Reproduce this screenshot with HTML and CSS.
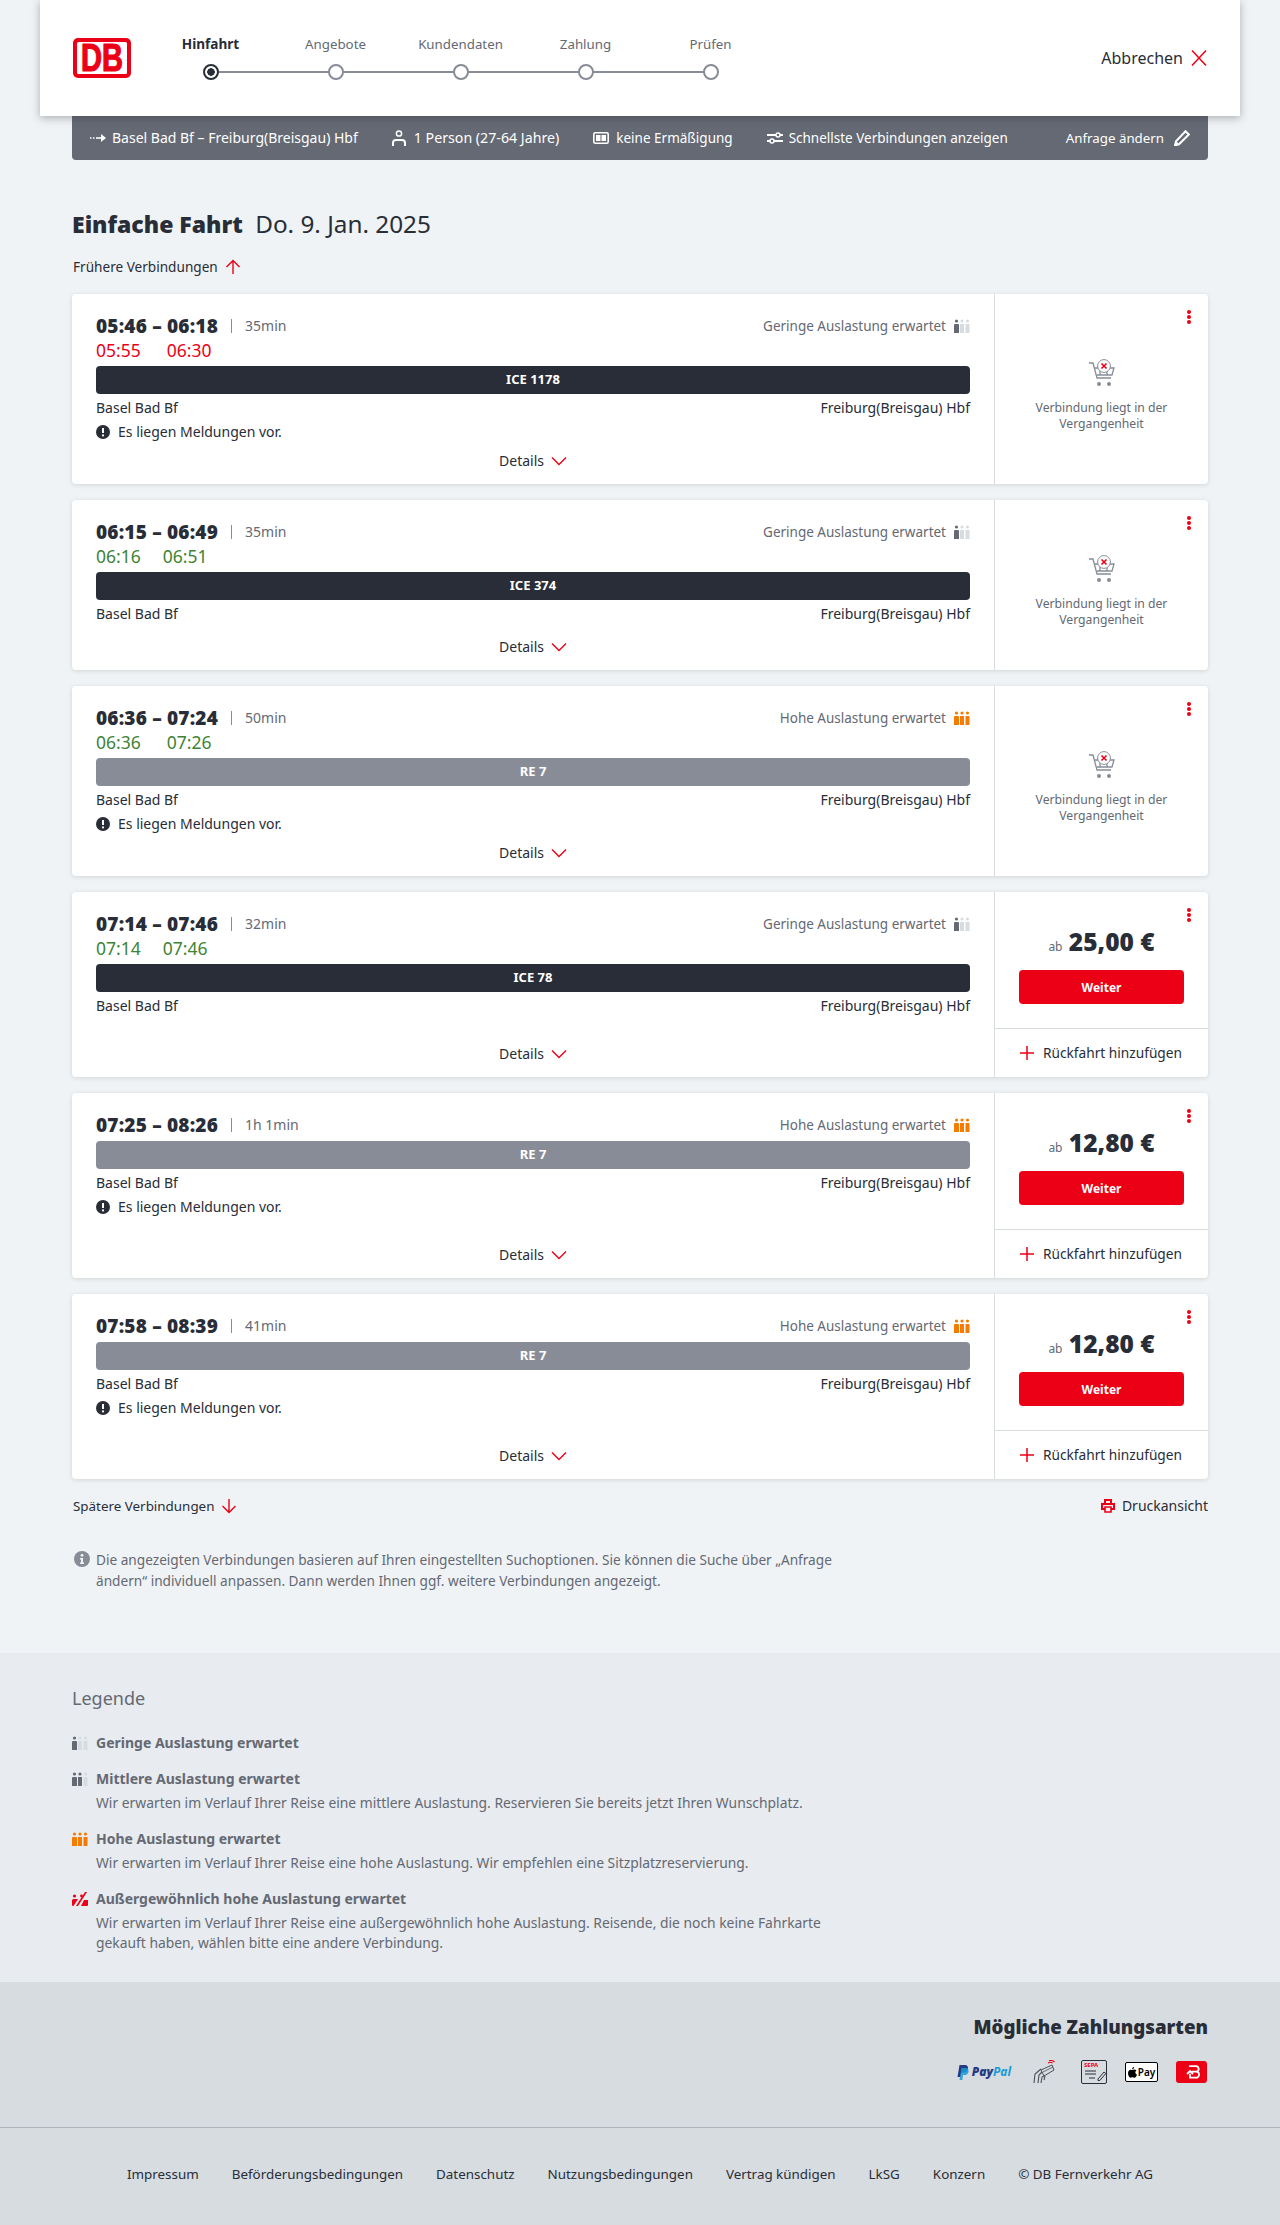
FILE: index.html
```html
<!DOCTYPE html>
<html lang="de">
<head>
    <meta charset="UTF-8">
    <meta name="viewport" content="width=device-width, initial-scale=1.0">
    <title>Einfache Fahrt - Angebote</title>
    <link rel="stylesheet" href="styles.css">
</head>
<body>
    <!-- Icon-Sprite -->
    <svg class="sprite" aria-hidden="true">
        <symbol id="i-load" viewBox="0 0 16 14">
            <circle class="p1" cx="2.5" cy="2" r="1.6"/><path class="p1" d="M0 6a1 1 0 0 1 1-1h3a1 1 0 0 1 1 1v8H0z"/>
            <circle class="p2" cx="8" cy="2" r="1.6"/><path class="p2" d="M6 5h4v9H6z"/>
            <circle class="p3" cx="13.5" cy="2" r="1.6"/><path class="p3" d="M11.5 5h4v9h-4z"/>
        </symbol>
        <symbol id="i-load-max" viewBox="0 0 16 14">
            <circle cx="2.5" cy="4" r="1.6"/><path d="M0 8.5a1.5 1.5 0 0 1 1.5-1.5H6L1.5 14H1a1 1 0 0 1-1-1z"/>
            <path d="M4 14l9-14h2L6 14z"/>
            <circle cx="9.5" cy="4" r="1.4"/><path d="M9 14l3-6h4v5a1 1 0 0 1-1 1z"/>
        </symbol>
        <symbol id="i-cart" viewBox="0 0 28 28">
            <path d="M1 4h4l4 15h14M7 9h19l-2 7H9M12 9v7M19 9v7" fill="none" stroke="#878c96" stroke-width="1.3"/>
            <circle cx="11" cy="25" r="2" fill="#878c96"/><circle cx="21" cy="25" r="2" fill="#878c96"/>
            <circle cx="16" cy="7" r="6.4" fill="#fff" stroke="#878c96" stroke-width="1"/>
            <path d="M13.5 4.5l5 5m0-5l-5 5" stroke="#ec0016" stroke-width="1.6"/>
        </symbol>
        <symbol id="i-chevron" viewBox="0 0 16 10"><path d="M1 1.5l7 7 7-7" fill="none" stroke="#ec0016" stroke-width="1.4"/></symbol>
        <symbol id="i-plus" viewBox="0 0 16 16"><path d="M8 1v14M1 8h14" stroke="#ec0016" stroke-width="1.5"/></symbol>
        <symbol id="i-alert" viewBox="0 0 14 14"><circle cx="7" cy="7" r="7" fill="#282d37"/><path d="M7 3v5" stroke="#fff" stroke-width="2"/><circle cx="7" cy="10.4" r="1.1" fill="#fff"/></symbol>
    </svg>

    <header class="top-bar">
        <svg class="db-logo" viewBox="0 0 58 40">
            <rect x="0" y="0" width="58" height="40" rx="5" fill="#ec0016"/>
            <rect x="4" y="4" width="50" height="32" rx="1.5" fill="#fff"/>
            <text x="29" y="33" class="db-logo-text" textLength="42" lengthAdjust="spacingAndGlyphs" text-anchor="middle">DB</text>
        </svg>
        <ol class="steps">
            <li class="step step-active"><span>Hinfahrt</span><i class="step-dot"></i></li>
            <li class="step"><span>Angebote</span><i class="step-dot"></i></li>
            <li class="step"><span>Kundendaten</span><i class="step-dot"></i></li>
            <li class="step"><span>Zahlung</span><i class="step-dot"></i></li>
            <li class="step"><span>Prüfen</span><i class="step-dot"></i></li>
        </ol>
        <a class="cancel">Abbrechen
            <svg width="16" height="16" viewBox="0 0 16 16"><path d="M1 .5l14 15m0-15L1 15.5" stroke="#ec0016" stroke-width="1.5"/></svg>
        </a>
    </header>

    <main class="content">
        <div class="search-bar">
            <span class="search-item item-route">
                <svg width="16" height="10" viewBox="0 0 16 10"><path d="M0 5h1.5M3 5h1.5" stroke="#fff" stroke-width="1.4"/><path d="M6 5h8" stroke="#fff" stroke-width="1.6"/><path d="M11 1l5 4-5 4z" fill="#fff"/></svg>
                Basel Bad Bf – Freiburg(Breisgau) Hbf</span>
            <span class="search-item item-person">
                <svg width="14" height="16" viewBox="0 0 14 16"><circle cx="7" cy="3.500" r="2.600" fill="none" stroke="#fff" stroke-width="1.500"/><path d="M1 16v-3a3 3 0 0 1 3-3h6a3 3 0 0 1 3 3v3" fill="none" stroke="#fff" stroke-width="2"/></svg>
                1 Person (27-64 Jahre)</span>
            <span class="search-item item-card">
                <svg width="16" height="14" viewBox="0 0 16 14"><rect x=".8" y="1.800" width="14.400" height="10.400" rx="1.500" fill="none" stroke="#fff" stroke-width="1.600"/><rect x="3" y="4" width="4.500" height="6" fill="#fff"/><rect x="8.500" y="4" width="4.500" height="6" fill="#fff"/></svg>
                keine Ermäßigung</span>
            <span class="search-item item-filter">
                <svg width="16" height="14" viewBox="0 0 16 14"><path d="M0 4h9M13 4h3M0 10h3M7 10h9" stroke="#fff" stroke-width="2"/><circle cx="11" cy="4" r="2" fill="none" stroke="#fff" stroke-width="1.500"/><circle cx="5" cy="10" r="2" fill="none" stroke="#fff" stroke-width="1.500"/></svg>
                Schnellste Verbindungen anzeigen</span>
            <span class="search-item item-change">Anfrage ändern
                <svg width="16" height="16" viewBox="0 0 16 16"><path d="M11.500 1.200l3.300 3.300L5 14.300l-4 1 1-4z" fill="none" stroke="#fff" stroke-width="2"/><path d="M1 15l1-4 3 3z" fill="#fff"/></svg>
            </span>
        </div>

        <h1 class="page-title"><b>Einfache Fahrt</b> <span>Do. 9. Jan. 2025</span></h1>

        <a class="more-link more-early">Frühere Verbindungen
            <svg width="16" height="16" viewBox="0 0 16 16"><path d="M8 15V1.500M1.500 8L8 1.500 14.500 8" fill="none" stroke="#ec0016" stroke-width="1.400"/></svg>
        </a>

        <!-- Verbindung 1 -->
        <article class="card">
            <div class="card-main">
                <div class="times-row">
                    <strong class="times">05:46 – 06:18</strong><span class="duration">35min</span>
                    <span class="load">Geringe Auslastung erwartet <svg class="load-icon load-low"><use href="#i-load"/></svg></span>
                </div>
                <div class="delay delay-late gap-wide"><span>05:55</span><span>06:30</span></div>
                <div class="train train-ice">ICE 1178</div>
                <div class="stations"><span>Basel Bad Bf</span><span>Freiburg(Breisgau) Hbf</span></div>
                <div class="notice"><svg width="14" height="14"><use href="#i-alert"/></svg>Es liegen Meldungen vor.</div>
                <a class="details">Details <svg width="16" height="10"><use href="#i-chevron"/></svg></a>
            </div>
            <aside class="card-side side-past">
                <i class="menu-dots"></i>
                <svg class="cart-icon" width="28" height="28"><use href="#i-cart"/></svg>
                <p>Verbindung liegt in der Vergangenheit</p>
            </aside>
        </article>

        <!-- Verbindung 2 -->
        <article class="card">
            <div class="card-main">
                <div class="times-row">
                    <strong class="times">06:15 – 06:49</strong><span class="duration">35min</span>
                    <span class="load">Geringe Auslastung erwartet <svg class="load-icon load-low"><use href="#i-load"/></svg></span>
                </div>
                <div class="delay gap-narrow"><span>06:16</span><span>06:51</span></div>
                <div class="train train-ice">ICE 374</div>
                <div class="stations"><span>Basel Bad Bf</span><span>Freiburg(Breisgau) Hbf</span></div>
                <a class="details">Details <svg width="16" height="10"><use href="#i-chevron"/></svg></a>
            </div>
            <aside class="card-side side-past">
                <i class="menu-dots"></i>
                <svg class="cart-icon" width="28" height="28"><use href="#i-cart"/></svg>
                <p>Verbindung liegt in der Vergangenheit</p>
            </aside>
        </article>

        <!-- Verbindung 3 -->
        <article class="card">
            <div class="card-main">
                <div class="times-row">
                    <strong class="times">06:36 – 07:24</strong><span class="duration">50min</span>
                    <span class="load">Hohe Auslastung erwartet <svg class="load-icon load-high"><use href="#i-load"/></svg></span>
                </div>
                <div class="delay gap-wide"><span>06:36</span><span>07:26</span></div>
                <div class="train train-re">RE 7</div>
                <div class="stations"><span>Basel Bad Bf</span><span>Freiburg(Breisgau) Hbf</span></div>
                <div class="notice"><svg width="14" height="14"><use href="#i-alert"/></svg>Es liegen Meldungen vor.</div>
                <a class="details">Details <svg width="16" height="10"><use href="#i-chevron"/></svg></a>
            </div>
            <aside class="card-side side-past">
                <i class="menu-dots"></i>
                <svg class="cart-icon" width="28" height="28"><use href="#i-cart"/></svg>
                <p>Verbindung liegt in der Vergangenheit</p>
            </aside>
        </article>

        <!-- Verbindung 4 -->
        <article class="card">
            <div class="card-main">
                <div class="times-row">
                    <strong class="times">07:14 – 07:46</strong><span class="duration">32min</span>
                    <span class="load">Geringe Auslastung erwartet <svg class="load-icon load-low"><use href="#i-load"/></svg></span>
                </div>
                <div class="delay gap-narrow"><span>07:14</span><span>07:46</span></div>
                <div class="train train-ice">ICE 78</div>
                <div class="stations"><span>Basel Bad Bf</span><span>Freiburg(Breisgau) Hbf</span></div>
                <a class="details">Details <svg width="16" height="10"><use href="#i-chevron"/></svg></a>
            </div>
            <aside class="card-side side-offer">
                <i class="menu-dots"></i>
                <div class="price"><small>ab</small> 25,00 €</div>
                <button class="next-btn">Weiter</button>
                <a class="add-return"><svg width="16" height="16"><use href="#i-plus"/></svg>Rückfahrt hinzufügen</a>
            </aside>
        </article>

        <!-- Verbindung 5 -->
        <article class="card">
            <div class="card-main">
                <div class="times-row">
                    <strong class="times">07:25 – 08:26</strong><span class="duration">1h 1min</span>
                    <span class="load">Hohe Auslastung erwartet <svg class="load-icon load-high"><use href="#i-load"/></svg></span>
                </div>
                <div class="train train-re">RE 7</div>
                <div class="stations"><span>Basel Bad Bf</span><span>Freiburg(Breisgau) Hbf</span></div>
                <div class="notice"><svg width="14" height="14"><use href="#i-alert"/></svg>Es liegen Meldungen vor.</div>
                <a class="details">Details <svg width="16" height="10"><use href="#i-chevron"/></svg></a>
            </div>
            <aside class="card-side side-offer">
                <i class="menu-dots"></i>
                <div class="price"><small>ab</small> 12,80 €</div>
                <button class="next-btn">Weiter</button>
                <a class="add-return"><svg width="16" height="16"><use href="#i-plus"/></svg>Rückfahrt hinzufügen</a>
            </aside>
        </article>

        <!-- Verbindung 6 -->
        <article class="card">
            <div class="card-main">
                <div class="times-row">
                    <strong class="times">07:58 – 08:39</strong><span class="duration">41min</span>
                    <span class="load">Hohe Auslastung erwartet <svg class="load-icon load-high"><use href="#i-load"/></svg></span>
                </div>
                <div class="train train-re">RE 7</div>
                <div class="stations"><span>Basel Bad Bf</span><span>Freiburg(Breisgau) Hbf</span></div>
                <div class="notice"><svg width="14" height="14"><use href="#i-alert"/></svg>Es liegen Meldungen vor.</div>
                <a class="details">Details <svg width="16" height="10"><use href="#i-chevron"/></svg></a>
            </div>
            <aside class="card-side side-offer">
                <i class="menu-dots"></i>
                <div class="price"><small>ab</small> 12,80 €</div>
                <button class="next-btn">Weiter</button>
                <a class="add-return"><svg width="16" height="16"><use href="#i-plus"/></svg>Rückfahrt hinzufügen</a>
            </aside>
        </article>

        <div class="after-cards">
            <a class="more-link more-late">Spätere Verbindungen
                <svg width="16" height="16" viewBox="0 0 16 16"><path d="M8 1v13.500M1.500 8L8 14.500 14.500 8" fill="none" stroke="#ec0016" stroke-width="1.400"/></svg>
            </a>
            <a class="print-link">
                <svg width="14" height="14" viewBox="0 0 14 14"><path d="M4 5V1h6v4M4 10H1V5h12v5h-3" fill="none" stroke="#ec0016" stroke-width="2"/><path d="M4 8h6v5H4z" fill="none" stroke="#ec0016" stroke-width="1.600"/></svg>
                Druckansicht</a>
        </div>

        <div class="info-note">
            <svg width="16" height="16" viewBox="0 0 16 16"><circle cx="8" cy="8" r="8" fill="#878c96"/><circle cx="8" cy="4.300" r="1.400" fill="#f0f3f5"/><path d="M6 7h3v4.500h1V13H6v-1.500h1V8.500H6z" fill="#f0f3f5"/></svg>
            <p>Die angezeigten Verbindungen basieren auf Ihren eingestellten Suchoptionen. Sie können die Suche über „Anfrage ändern“ individuell anpassen. Dann werden Ihnen ggf. weitere Verbindungen angezeigt.</p>
        </div>
    </main>

    <section class="legend">
        <h2>Legende</h2>
        <div class="legend-item">
            <svg class="load-icon load-low"><use href="#i-load"/></svg>
            <div><h3>Geringe Auslastung erwartet</h3></div>
        </div>
        <div class="legend-item">
            <svg class="load-icon load-mid"><use href="#i-load"/></svg>
            <div><h3>Mittlere Auslastung erwartet</h3>
            <p>Wir erwarten im Verlauf Ihrer Reise eine mittlere Auslastung. Reservieren Sie bereits jetzt Ihren Wunschplatz.</p></div>
        </div>
        <div class="legend-item">
            <svg class="load-icon load-high"><use href="#i-load"/></svg>
            <div><h3>Hohe Auslastung erwartet</h3>
            <p>Wir erwarten im Verlauf Ihrer Reise eine hohe Auslastung. Wir empfehlen eine Sitzplatzreservierung.</p></div>
        </div>
        <div class="legend-item">
            <svg class="load-icon load-max"><use href="#i-load-max"/></svg>
            <div><h3>Außergewöhnlich hohe Auslastung erwartet</h3>
            <p>Wir erwarten im Verlauf Ihrer Reise eine außergewöhnlich hohe Auslastung. Reisende, die noch keine Fahrkarte gekauft haben, wählen bitte eine andere Verbindung.</p></div>
        </div>
    </section>

    <section class="payment">
        <h2>Mögliche Zahlungsarten</h2>
        <div class="pay-icons">
            <span class="pay-paypal">
                <svg width="12" height="15" viewBox="0 0 12 15"><path d="M2.500 0h5c3 0 4 2 3.300 4.200C10 7 8 7.500 5.500 7.500H4.300L3.500 12H.5z" fill="#253b80"/><path d="M4.500 3h4.800c2 .5 2.700 2 2.200 4-.7 2.500-2.500 3-4.500 3H6l-.7 5H2.500z" fill="#179bd7" opacity=".85"/></svg>
                <em><b>Pay</b>Pal</em></span>
            <svg class="pay-nfc" width="22" height="24" viewBox="0 0 22 24">
                <path d="M8 10l11-5 2 5-10 6z" fill="none" stroke="#4a4f58" stroke-width="1"/>
                <path d="M10 12l10-5" fill="none" stroke="#4a4f58" stroke-width=".8"/>
                <path d="M1 23l1-9 6-5M5 23l1-8 3-3M8 23l1-6 2-1M12 16l-1 4" fill="none" stroke="#4a4f58" stroke-width="1.100"/>
                <path d="M15 3c1.500-1 3-1 4.500 0M16 .8c2-.6 4-.2 5.500 1.200" fill="none" stroke="#ec0016" stroke-width="1.200"/>
            </svg>
            <span class="pay-sepa"><b>SEPA</b>
                <svg width="22" height="11" viewBox="0 0 22 11"><path d="M1 1h11M1 4h11M5 8h6" stroke="#282d37" stroke-width="1"/><path d="M14 9l6-7 1.800 1.500-6 7H14z" fill="#d7dce1" stroke="#282d37" stroke-width="1"/></svg></span>
            <span class="pay-apple">
                <svg width="9" height="11" viewBox="0 0 9 11"><path d="M6.200 0c0 1.300-1 2.400-2.200 2.300C3.900 1.100 5 .1 6.200 0zM4.300 3c.6 0 1.200-.5 2.100-.5.700 0 1.500.4 2 1.100-1.700 1-1.400 3.400.6 4.100-.5 1.300-1.500 3-2.500 3-.8 0-1.100-.5-2-.5-1 0-1.300.5-2 .5C1.300 10.700 0 8.300 0 6.200 0 4 1.400 2.700 2.600 2.700c.7 0 1.300.3 1.700.3z" fill="#000"/></svg>
                Pay</span>
            <span class="pay-bahn"><svg width="16" height="14" viewBox="0 0 16 14"><path d="M5 1.200h6.500a2.800 2.800 0 0 1 1 5.500h-5m5 0a3 3 0 0 1-1 6H6v-4M3 9l3-3 3 3" fill="none" stroke="#fff" stroke-width="1.800"/></svg></span>
        </div>
    </section>

    <footer class="page-footer">
        <a>Impressum</a>
        <a>Beförderungsbedingungen</a>
        <a>Datenschutz</a>
        <a>Nutzungsbedingungen</a>
        <a>Vertrag kündigen</a>
        <a>LkSG</a>
        <a>Konzern</a>
        <a>© DB Fernverkehr AG</a>
    </footer>
</body>
</html>
```

FILE: styles.css
```css
body {
    margin: 0;
    background-color: #f0f3f5;
    color: #282d37;
    font-family: "Noto Sans", Arial, sans-serif;
    font-size: 14px;
    line-height: 20px;
}
.sprite {
    display: none;
}
a {
    color: inherit;
}

/* Kopfzeile */
.top-bar {
    position: relative;
    z-index: 2;
    display: flex;
    align-items: center;
    width: 1200px;
    height: 116px;
    margin: 0 auto;
    padding: 0 33px 0 32px;
    box-sizing: border-box;
    background-color: #ffffff;
    box-shadow: 0 2px 8px rgba(40, 45, 55, 0.35);
}
.db-logo {
    flex: none;
    width: 58px;
    height: 40px;
    margin-left: 1px;
    overflow: visible;
}
.db-logo-text {
    fill: #ec0016;
    font-family: "Liberation Sans", Arial, sans-serif;
    font-weight: bold;
    font-size: 38px;
    stroke: #ec0016;
    stroke-width: 1.2px;
}
.steps {
    display: flex;
    margin: 0 0 2px 17px;
    padding: 0;
    list-style: none;
}
.step {
    position: relative;
    display: flex;
    flex-direction: column;
    align-items: center;
    width: 125px;
    color: #646973;
    font-size: 13.3px;
}
.step span {
    margin-bottom: 10px;
}
.step-active {
    color: #282d37;
    font-size: 13.6px;
    font-weight: 700;
}
.step-dot {
    position: relative;
    z-index: 1;
    width: 16px;
    height: 16px;
    box-sizing: border-box;
    border: 2px solid #878c96;
    border-radius: 50%;
    background-color: #ffffff;
}
.step-active .step-dot {
    border-color: #282d37;
    background: radial-gradient(circle, #282d37 0 3.5px, #ffffff 4px);
}
.step::after {
    content: "";
    position: absolute;
    left: 50%;
    right: -50%;
    bottom: 7px;
    height: 2px;
    background-color: #878c96;
}
.step:last-child::after {
    display: none;
}
.cancel {
    display: flex;
    align-items: center;
    gap: 8px;
    margin-left: auto;
    font-size: 16px;
}

.content {
    padding: 0 72px;
}

/* Suchleiste */
.search-bar {
    display: flex;
    align-items: center;
    height: 44px;
    padding: 0 18px;
    border-radius: 0 0 4px 4px;
    background-color: #646973;
    color: #ffffff;
}
.search-item {
    display: flex;
    align-items: center;
    gap: 6px;
    white-space: nowrap;
}
.item-person {
    gap: 8px;
    margin-left: 34px;
    font-size: 14.2px;
}
.item-card {
    gap: 7px;
    margin-left: 34px;
    font-size: 13.5px;
}
.item-filter {
    margin-left: 34px;
    font-size: 13.5px;
}
.item-change {
    gap: 10px;
    margin-left: auto;
    font-size: 13.3px;
}

.page-title {
    margin: 48px 0 0;
    font-size: 24.3px;
    line-height: 32px;
    font-weight: 400;
}
.page-title b {
    margin-right: 6px;
    font-size: 23px;
    font-weight: 900;
}

.more-link {
    display: flex;
    align-items: center;
    gap: 7px;
    height: 24px;
    padding-left: 1px;
    font-size: 13.6px;
}
.more-early {
    margin: 15px 0;
}
.more-late {
    font-size: 13.4px;
}

/* Verbindungen */
.card {
    display: flex;
    min-height: 170px;
    margin-bottom: 16px;
    border-radius: 4px;
    background-color: #ffffff;
    box-shadow: 0 1px 4px rgba(40, 45, 55, 0.15);
}
.card-main {
    flex: 1;
    display: flex;
    flex-direction: column;
    padding: 20px 24px 11px;
}
.times-row {
    display: flex;
    align-items: center;
    height: 24px;
}
.times {
    font-size: 19px;
    font-weight: 900;
    letter-spacing: 0.2px;
}
.duration {
    margin-left: 13px;
    padding-left: 14px;
    color: #646973;
    background: linear-gradient(#878c96, #878c96) no-repeat left center / 1px 14px;
}
.load {
    display: flex;
    align-items: center;
    gap: 8px;
    margin-left: auto;
    color: #646973;
    font-size: 13.5px;
}
.load-icon {
    flex: none;
    width: 16px;
    height: 14px;
}
.p1 { fill: var(--person1); }
.p2 { fill: var(--person2); }
.p3 { fill: var(--person3); }
.load-low {
    --person1: #646973;
    --person2: #d7dce1;
    --person3: #d7dce1;
}
.load-mid {
    --person1: #646973;
    --person2: #646973;
    --person3: #d7dce1;
}
.load-high {
    --person1: #f57c00;
    --person2: #f57c00;
    --person3: #f57c00;
}
.load-max { fill: #ec0016; }

.delay {
    display: flex;
    height: 24px;
    align-items: center;
    font-size: 17.5px;
    color: #408335;
}
.delay-late {
    color: #ec0016;
}
.gap-wide {
    gap: 26px;
}
.gap-narrow {
    gap: 22px;
}
.train {
    height: 28px;
    margin-top: 4px;
    border-radius: 4px;
    color: #ffffff;
    font-size: 13px;
    font-weight: 700;
    line-height: 27px;
    text-align: center;
}
.train-ice {
    background-color: #282d37;
}
.train-re {
    background-color: #878c96;
}
.stations {
    display: flex;
    justify-content: space-between;
    height: 24px;
    margin-top: 2px;
    line-height: 24px;
}
.notice {
    display: flex;
    align-items: center;
    gap: 8px;
    height: 24px;
}
.details {
    display: flex;
    align-items: center;
    justify-content: center;
    gap: 7px;
    height: 24px;
    margin-top: auto;
    padding-top: 5px;
}

.card-side {
    position: relative;
    flex: none;
    width: 214px;
    box-sizing: border-box;
    border-left: 1px solid #d7dce1;
}
/* drei Punkte oben rechts */
.menu-dots {
    position: absolute;
    top: 16px;
    right: 17px;
    width: 4px;
    height: 4px;
    border-radius: 50%;
    background-color: #ec0016;
    box-shadow: 0 5px 0 #ec0016, 0 10px 0 #ec0016;
}
.side-past {
    display: flex;
    flex-direction: column;
    align-items: center;
    justify-content: center;
    padding-top: 13px;
    color: #646973;
    font-size: 12.2px;
    line-height: 16px;
    text-align: center;
}
.side-past p {
    width: 150px;
    margin: 13px 0 0;
}
.cart-icon {
    display: block;
}
.side-offer {
    display: flex;
    flex-direction: column;
    align-items: stretch;
    height: 185px;
}
.price {
    height: 36px;
    margin-top: 32px;
    font-size: 24.5px;
    font-weight: 900;
    line-height: 36px;
    text-align: center;
}
.price small {
    color: #646973;
    font-size: 12px;
    font-weight: 400;
}
.next-btn {
    height: 34px;
    margin: 10px 24px 0;
    border: none;
    border-radius: 4px;
    background-color: #ec0016;
    color: #ffffff;
    font-family: inherit;
    font-size: 12px;
    font-weight: 700;
}
.add-return {
    display: flex;
    align-items: center;
    gap: 8px;
    height: 48px;
    margin-top: 24px;
    padding-left: 24px;
    border-top: 1px solid #d7dce1;
    font-size: 13.7px;
}

.after-cards {
    display: flex;
    justify-content: space-between;
    align-items: center;
    height: 22px;
}
.print-link {
    display: flex;
    align-items: center;
    gap: 7px;
}
.info-note {
    display: flex;
    gap: 6px;
    width: 762px;
    margin-top: 32px;
    padding-left: 2px;
    color: #646973;
    font-size: 13.65px;
    line-height: 21px;
}
.info-note svg {
    flex: none;
    margin-top: 2px;
}
.info-note p {
    margin: 0;
}

/* Legende */
.legend {
    margin-top: 62px;
    padding: 33px 72px 29px;
    background-color: #e8ebef;
    color: #646973;
}
.legend h2 {
    margin: 0 0 23px;
    font-size: 18px;
    font-weight: 400;
    line-height: 24px;
}
.legend-item {
    display: flex;
    gap: 8px;
    max-width: 780px;
    margin-bottom: 16px;
}
.legend-item:last-child {
    margin-bottom: 0;
}
.legend-item .load-icon {
    margin-top: 3px;
}
.legend-item h3 {
    margin: 0;
    font-size: 14px;
    font-weight: 700;
    line-height: 20px;
}
.legend-item p {
    margin: 4px 0 0;
    font-size: 13.85px;
}

/* Zahlungsarten */
.payment {
    padding: 31px 72px 43px;
    background-color: #d7dce1;
    text-align: right;
}
.payment h2 {
    margin: 0;
    font-size: 18.7px;
    font-weight: 900;
    line-height: 28px;
}
.pay-icons {
    display: flex;
    justify-content: flex-end;
    align-items: center;
    gap: 18px;
    height: 24px;
    margin-top: 19px;
}
.pay-paypal {
    display: flex;
    align-items: center;
    gap: 3px;
    margin-right: 4px;
    color: #179bd7;
    font-size: 12px;
    font-weight: 700;
}
.pay-paypal b {
    color: #253b80;
}
.pay-nfc {
    margin-right: 8px;
}
.pay-sepa {
    display: flex;
    flex-direction: column;
    align-items: flex-start;
    width: 26px;
    height: 24px;
    box-sizing: border-box;
    border: 1px solid #282d37;
    border-radius: 2px;
    padding-left: 2px;
    color: #ec0016;
    font-size: 6px;
    line-height: 9px;
}
.pay-apple {
    display: flex;
    align-items: center;
    justify-content: center;
    gap: 1px;
    width: 33px;
    height: 20px;
    box-sizing: border-box;
    border: 1px solid #000000;
    border-radius: 2px;
    background-color: #ffffff;
    color: #000000;
    font-size: 10px;
    font-weight: 600;
}
.pay-bahn {
    display: flex;
    align-items: center;
    justify-content: center;
    width: 31px;
    height: 22px;
    margin-right: 1px;
    border-radius: 3px;
    background-color: #ec0016;
}

.page-footer {
    display: flex;
    justify-content: center;
    align-items: center;
    gap: 33px;
    height: 99px;
    padding-bottom: 7px;
    box-sizing: border-box;
    border-top: 1px solid #afb4bb;
    background-color: #d7dce1;
    font-size: 13.4px;
}
```
